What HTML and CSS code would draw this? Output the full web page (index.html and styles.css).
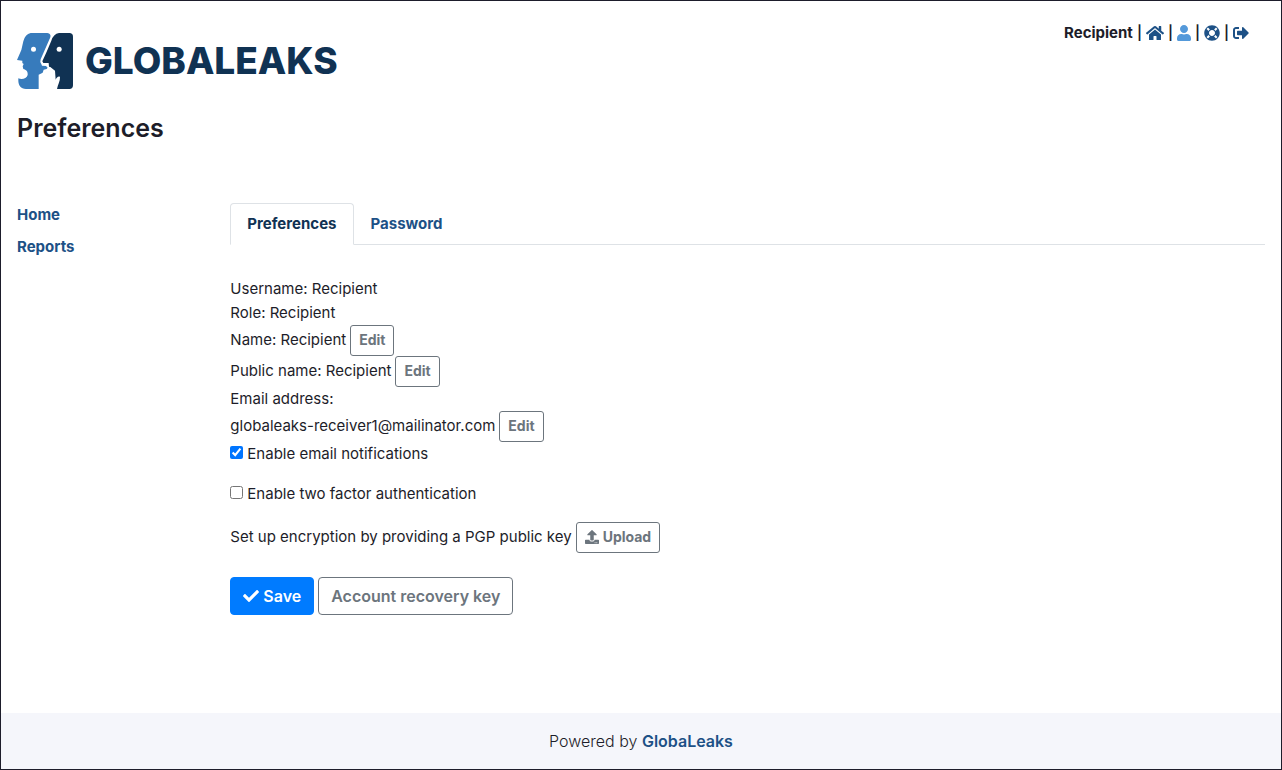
FILE: index.html
```html
<!DOCTYPE html>
<html lang="en">
<head>
<meta charset="utf-8">
<title>GlobaLeaks - Preferences</title>
<link rel="stylesheet" href="styles.css">
</head>
<body>
<div class="page">
  <header class="header">
    <div class="brand">
      <a class="logo" href="#" aria-label="GlobaLeaks">
        <svg class="logo-mark" viewBox="51 39 168 168" aria-hidden="true">
          <path fill="#377bbc" d="M92 39H142Q154 41 151 52L122 118Q119 126 124 132L126 137L138 138L143 143L140 147L131 149L128 158L116 164V207H78C62 206 55 195 55 182V175C64 180 80 177 83 165C84 153 78 149 70 147L68 139L71 132L67 129V122L51 120L64 90L70 64Q75 43 92 39Z"/>
          <path fill="#103253" d="M177 39H208Q219 39 219 50V196Q219 207 208 207H171C173 195 181 183 180 171C176 167 169 173 167 179L165 152L151 141L147 140L146 129H130L127 124L140 95L154 62Q160 42 177 39Z"/>
          <circle cx="100.500" cy="88" r="7.500" fill="#fff"/>
          <circle cx="177.500" cy="88" r="7.500" fill="#fff"/>
        </svg>
        <span class="logo-text">GLOBALEAKS</span>
      </a>
      <h1 class="title">Preferences</h1>
    </div>
    <nav class="user-nav" aria-label="Account">
      <span>Recipient</span>
      <span class="separator">|</span>
      <a href="#" aria-label="Home"><svg class="icon icon-wide" viewBox="0 0 576 512"><path d="M280.370 148.260L96 300.110V464a16 16 0 0 0 16 16l112.060-.290a16 16 0 0 0 15.920-16V368a16 16 0 0 1 16-16h64a16 16 0 0 1 16 16v95.640a16 16 0 0 0 16 16.050L464 480a16 16 0 0 0 16-16V300L295.670 148.260a12.190 12.190 0 0 0-15.300 0zM571.600 251.470L488 182.560V44.050a12 12 0 0 0-12-12h-56a12 12 0 0 0-12 12v72.610L318.470 43a48 48 0 0 0-61 0L4.340 251.470a12 12 0 0 0-1.600 16.900l25.500 31A12 12 0 0 0 45.150 301l235.220-193.740a12.190 12.190 0 0 1 15.300 0L530.900 301a12 12 0 0 0 16.900-1.600l25.500-31a12 12 0 0 0-1.700-16.930z"/></svg></a>
      <span class="separator">|</span>
      <a class="current" href="#" aria-label="Preferences"><svg class="icon icon-narrow" viewBox="0 0 448 512"><path d="M224 256c70.700 0 128-57.300 128-128S294.700 0 224 0 96 57.300 96 128s57.300 128 128 128zm89.600 32h-16.700c-22.200 10.200-46.900 16-72.900 16s-50.600-5.800-72.900-16h-16.700C60.200 288 0 348.200 0 422.400V464c0 26.500 21.500 48 48 48h352c26.500 0 48-21.500 48-48v-41.600c0-74.200-60.200-134.400-134.400-134.400z"/></svg></a>
      <span class="separator">|</span>
      <a href="#" aria-label="Support"><svg class="icon" viewBox="0 0 512 512"><path d="M256 8C119.033 8 8 119.033 8 256s111.033 248 248 248 248-111.033 248-248S392.967 8 256 8zm173.696 119.559l-63.399 63.399c-10.987-18.559-26.670-34.252-45.255-45.255l63.399-63.399a218.396 218.396 0 0 1 45.255 45.255zM256 352c-53.019 0-96-42.981-96-96s42.981-96 96-96 96 42.981 96 96-42.981 96-96 96zM127.559 82.304l63.399 63.399c-18.559 10.987-34.252 26.670-45.255 45.255l-63.399-63.399a218.372 218.372 0 0 1 45.255-45.255zM82.304 384.441l63.399-63.399c10.987 18.559 26.670 34.252 45.255 45.255l-63.399 63.399a218.396 218.396 0 0 1-45.255-45.255zm302.137 45.255l-63.399-63.399c18.559-10.987 34.252-26.670 45.255-45.255l63.399 63.399a218.403 218.403 0 0 1-45.255 45.255z"/></svg></a>
      <span class="separator">|</span>
      <a href="#" aria-label="Log out"><svg class="icon" viewBox="0 0 512 512"><path d="M497 273L329 441c-15 15-41 4.500-41-17v-96H152c-13.300 0-24-10.700-24-24v-96c0-13.300 10.700-24 24-24h136V88c0-21.400 25.900-32 41-17l168 168c9.300 9.400 9.300 24.600 0 34zM192 436v-40c0-6.600-5.400-12-12-12H96c-17.700 0-32-14.300-32-32V160c0-17.700 14.300-32 32-32h84c6.600 0 12-5.400 12-12V76c0-6.600-5.400-12-12-12H96c-53 0-96 43-96 96v192c0 53 43 96 96 96h84c6.600 0 12-5.400 12-12z"/></svg></a>
    </nav>
  </header>

  <div class="columns">
    <nav class="sidebar" aria-label="Main">
      <a href="#">Home</a>
      <a href="#">Reports</a>
    </nav>
    <main class="content">
      <div class="tabs" role="tablist">
        <a class="tab active" href="#" role="tab" aria-selected="true">Preferences</a>
        <a class="tab" href="#" role="tab" aria-selected="false">Password</a>
      </div>
      <form class="settings">
        <div class="group">
          <div class="row">Username: Recipient</div>
          <div class="row">Role: Recipient</div>
          <div class="row"><span>Name: Recipient</span><button class="btn btn-sm" type="button">Edit</button></div>
          <div class="row"><span>Public name: Recipient</span><button class="btn btn-sm" type="button">Edit</button></div>
          <div class="row">Email address:</div>
          <div class="row"><span>globaleaks-receiver1@mailinator.com</span><button class="btn btn-sm" type="button">Edit</button></div>
          <div class="row"><input id="notifications" type="checkbox" checked><label for="notifications">Enable email notifications</label></div>
        </div>
        <div class="row"><input id="two-factor" type="checkbox"><label for="two-factor">Enable two factor authentication</label></div>
        <div class="row"><span>Set up encryption by providing a PGP public key</span><button class="btn btn-sm" type="button"><svg class="icon icon-small" viewBox="0 0 512 512"><path d="M296 384h-80c-13.300 0-24-10.700-24-24V192h-87.700c-17.800 0-26.700-21.500-14.100-34.100L242.300 5.700c7.500-7.500 19.800-7.500 27.300 0l152.200 152.200c12.600 12.600 3.700 34.100-14.100 34.100H320v168c0 13.300-10.700 24-24 24zm216-8v112c0 13.300-10.700 24-24 24H24c-13.300 0-24-10.700-24-24V376c0-13.300 10.700-24 24-24h136v8c0 30.900 25.100 56 56 56h80c30.900 0 56-25.100 56-56v-8h136c13.300 0 24 10.700 24 24zm-124 88c0-11-9-20-20-20s-20 9-20 20 9 20 20 20 20-9 20-20zm64 0c0-11-9-20-20-20s-20 9-20 20 9 20 20 20 20-9 20-20z"/></svg>Upload</button></div>
        <div class="row actions">
          <button class="btn btn-primary" type="submit"><svg class="icon" viewBox="0 0 512 512"><path d="M173.898 439.404l-166.400-166.400c-9.997-9.997-9.997-26.206 0-36.204l36.203-36.204c9.997-9.998 26.207-9.998 36.204 0L192 312.690 432.095 72.596c9.997-9.997 26.207-9.997 36.204 0l36.203 36.204c9.997 9.997 9.997 26.206 0 36.204l-294.400 294.401c-9.998 9.997-26.207 9.997-36.204-.001z"/></svg>Save</button>
          <button class="btn" type="button">Account recovery key</button>
        </div>
      </form>
    </main>
  </div>

  <footer class="footer">Powered by <a href="#">GlobaLeaks</a></footer>
</div>
</body>
</html>
```
FILE: styles.css
```css
* { box-sizing: border-box; }
body {
  margin: 0;
  background: #fff;
  color: #1d1d29;
  font: 400 15px/24px Metropolis, Inter, "Open Sans", sans-serif;
}
a { color: #1d5186; font-weight: 700; text-decoration: none; }
.page {
  display: flex;
  flex-direction: column;
  min-height: 100vh;
  border: 1px solid #1d1d2b;
}
.header {
  display: flex;
  justify-content: space-between;
  align-items: flex-start;
  padding: 20px 32px 0 16px;
}
.brand { padding-top: 12px; }
.logo { display: flex; align-items: center; gap: 12px; }
.logo-mark { width: 56px; height: 56px; }
.logo-text {
  color: #103253;
  font-size: 37px;
  line-height: 56px;
  font-weight: 800;
}
.title { margin: 23px 0 0; font-size: 25px; line-height: 32px; font-weight: 600; }
.user-nav { display: flex; align-items: center; gap: 4px; font-weight: 700; }
.user-nav a { display: flex; }
.user-nav .current { color: #5499da; }
.separator { font-size: 14px; font-weight: 600; }
.icon { width: 16px; height: 16px; fill: currentColor; flex: none; }
.icon-wide { width: 18px; }
.icon-narrow { width: 14px; }
.icon-small { width: 14px; height: 14px; }
.columns {
  display: grid;
  grid-template-columns: 1fr 5fr;
  flex: 1;
  padding-top: 59px;
}
.sidebar { display: flex; flex-direction: column; gap: 8px; padding: 0 16px; }
.content { padding: 0 16px; }
.tabs { display: flex; border-bottom: 1px solid #dee2e6; }
.tab {
  padding: 8px 16px;
  margin-bottom: -1px;
  border: 1px solid transparent;
  border-radius: 4px 4px 0 0;
}
.tab.active {
  color: #103253;
  background: #fff;
  border-color: #dee2e6 #dee2e6 #fff;
}
.settings { display: flex; flex-direction: column; gap: 16px; padding: 32px 0; }
.row { display: flex; align-items: baseline; gap: 4px; }
.row input { width: 13px; height: 13px; margin: 0; }
.actions { padding-top: 8px; }
.btn {
  padding: 6px 12px;
  border: 1px solid #6c757d;
  border-radius: 4px;
  background: #fff;
  color: #6c757d;
  font: inherit;
  font-size: 16px;
  font-weight: 600;
}
.btn .icon { margin-right: 4px; vertical-align: -2px; }
.btn-sm { padding: 3px 8px 5px; font-size: 14px; font-weight: 700; line-height: 21px; border-radius: 3px; }
.btn-primary { background: #007bff; border-color: #007bff; color: #fff; }
.footer { padding: 16px; background: #f5f6fb; font-size: 16px; font-weight: 300; text-align: center; }
.footer a { font-weight: 600; }
```
